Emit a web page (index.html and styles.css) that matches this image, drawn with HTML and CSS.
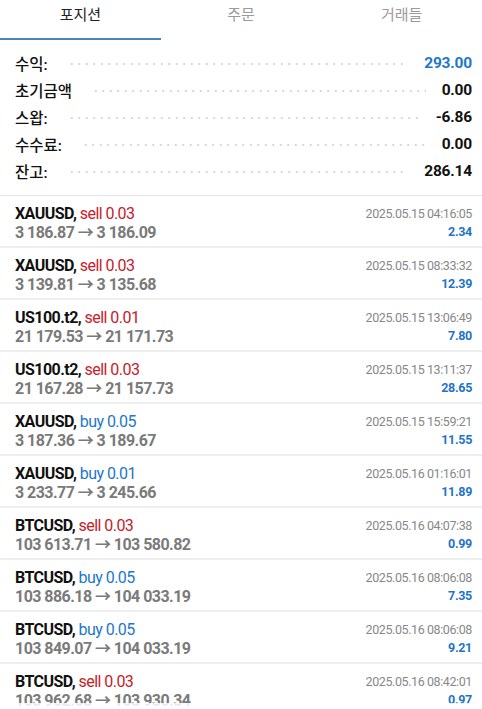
FILE: index.html
```html
<!DOCTYPE html>
<html lang="ko">
<head>
<meta charset="UTF-8">
<meta name="viewport" content="width=device-width, initial-scale=1.0">
<title>포지션</title>
<link rel="stylesheet" href="styles.css">
</head>
<body>

<div class="tabs">
    <div class="tab active">포지션</div>
    <div class="tab">주문</div>
    <div class="tab">거래들</div>
</div>

<div class="summary">
    <div class="srow"><span class="lbl">수익:</span><span class="dots"></span><span class="val blue">293.00</span></div>
    <div class="srow"><span class="lbl">초기금액</span><span class="dots"></span><span class="val">0.00</span></div>
    <div class="srow"><span class="lbl">스왑:</span><span class="dots"></span><span class="val">-6.86</span></div>
    <div class="srow"><span class="lbl">수수료:</span><span class="dots"></span><span class="val">0.00</span></div>
    <div class="srow"><span class="lbl">잔고:</span><span class="dots"></span><span class="val">286.14</span></div>
</div>

<div class="trades">
    <div class="trade">
        <div class="left">
            <div class="sym">XAUUSD, <span class="sell">sell 0.03</span></div>
            <div class="price">3 186.87 → 3 186.09</div>
        </div>
        <div class="right">
            <div class="time">2025.05.15 04:16:05</div>
            <div class="profit">2.34</div>
        </div>
    </div>
    <div class="trade">
        <div class="left">
            <div class="sym">XAUUSD, <span class="sell">sell 0.03</span></div>
            <div class="price">3 139.81 → 3 135.68</div>
        </div>
        <div class="right">
            <div class="time">2025.05.15 08:33:32</div>
            <div class="profit">12.39</div>
        </div>
    </div>
    <div class="trade">
        <div class="left">
            <div class="sym">US100.t2, <span class="sell">sell 0.01</span></div>
            <div class="price">21 179.53 → 21 171.73</div>
        </div>
        <div class="right">
            <div class="time">2025.05.15 13:06:49</div>
            <div class="profit">7.80</div>
        </div>
    </div>
    <div class="trade">
        <div class="left">
            <div class="sym">US100.t2, <span class="sell">sell 0.03</span></div>
            <div class="price">21 167.28 → 21 157.73</div>
        </div>
        <div class="right">
            <div class="time">2025.05.15 13:11:37</div>
            <div class="profit">28.65</div>
        </div>
    </div>
    <div class="trade">
        <div class="left">
            <div class="sym">XAUUSD, <span class="buy">buy 0.05</span></div>
            <div class="price">3 187.36 → 3 189.67</div>
        </div>
        <div class="right">
            <div class="time">2025.05.15 15:59:21</div>
            <div class="profit">11.55</div>
        </div>
    </div>
    <div class="trade">
        <div class="left">
            <div class="sym">XAUUSD, <span class="buy">buy 0.01</span></div>
            <div class="price">3 233.77 → 3 245.66</div>
        </div>
        <div class="right">
            <div class="time">2025.05.16 01:16:01</div>
            <div class="profit">11.89</div>
        </div>
    </div>
    <div class="trade">
        <div class="left">
            <div class="sym">BTCUSD, <span class="sell">sell 0.03</span></div>
            <div class="price">103 613.71 → 103 580.82</div>
        </div>
        <div class="right">
            <div class="time">2025.05.16 04:07:38</div>
            <div class="profit">0.99</div>
        </div>
    </div>
    <div class="trade">
        <div class="left">
            <div class="sym">BTCUSD, <span class="buy">buy 0.05</span></div>
            <div class="price">103 886.18 → 104 033.19</div>
        </div>
        <div class="right">
            <div class="time">2025.05.16 08:06:08</div>
            <div class="profit">7.35</div>
        </div>
    </div>
    <div class="trade">
        <div class="left">
            <div class="sym">BTCUSD, <span class="buy">buy 0.05</span></div>
            <div class="price">103 849.07 → 104 033.19</div>
        </div>
        <div class="right">
            <div class="time">2025.05.16 08:06:08</div>
            <div class="profit">9.21</div>
        </div>
    </div>
    <div class="trade">
        <div class="left">
            <div class="sym">BTCUSD, <span class="sell">sell 0.03</span></div>
            <div class="price">103 962.68 → 103 930.34</div>
        </div>
        <div class="right">
            <div class="time">2025.05.16 08:42:01</div>
            <div class="profit">0.97</div>
        </div>
    </div>
</div>

<div class="bottom_fade"></div>

</body>
</html>
```

FILE: styles.css
```css
body {
  margin: 0;
  background: #fff;
  font-family: Roboto, "Noto Sans CJK KR", sans-serif;
  color: #111;
  height: 709px;
  overflow: hidden;
}

/* tab bar on top */
.tabs {
  display: flex;
  height: 40px;
}

.tab {
  flex: 1;
  text-align: center;
  font-size: 15px;
  line-height: 31px;
  color: #9a9a9a;
}

.tab.active {
  color: #222;
  border-bottom: 2px solid #4a86b8;
  height: 38px;
}

/* account summary */
.summary {
  padding: 9px 10px 11px 15px;
  border-bottom: 1px solid #e6e6e6;
}

.srow {
  display: flex;
  align-items: center;
  height: 27px;
  font-size: 15.5px;
}

.lbl {
  font-weight: 500;
}

.dots {
  flex: 1;
  height: 2px;
  margin: 3px 16px 0 20px;
  background-image: radial-gradient(circle, #d6d6d6 0.9px, transparent 1.1px);
  background-size: 7.5px 2px;
}

.val {
  font-weight: 700;
  letter-spacing: -0.2px;
}

.blue {
  color: #2277cc;
}

/* trade list */
.trade {
  display: flex;
  justify-content: space-between;
  height: 50px;
  padding: 0 10px 0 15px;
  border-bottom: 2px solid #eeeeee;
}

.left {
  padding-top: 8px;
}

.sym {
  font-size: 16px;
  font-weight: 700;
  line-height: 19px;
  letter-spacing: -0.55px;
}

.sell {
  color: #c8202a;
  font-weight: 400;
}

.buy {
  color: #2277cc;
  font-weight: 400;
}

.price {
  font-size: 16px;
  font-weight: 700;
  color: #7a7a7a;
  line-height: 19px;
  letter-spacing: -0.55px;
}

.right {
  text-align: right;
  padding-top: 9px;
}

.time {
  font-size: 12.5px;
  color: #888;
  line-height: 17px;
  letter-spacing: -0.4px;
}

.profit {
  font-size: 12.5px;
  font-weight: 700;
  color: #1f74c9;
  line-height: 20px;
  letter-spacing: -0.3px;
}

.bottom_fade {
  position: fixed;
  left: 0;
  right: 0;
  bottom: 0;
  height: 6px;
  background: rgba(255, 255, 255, 0.85);
}
```
